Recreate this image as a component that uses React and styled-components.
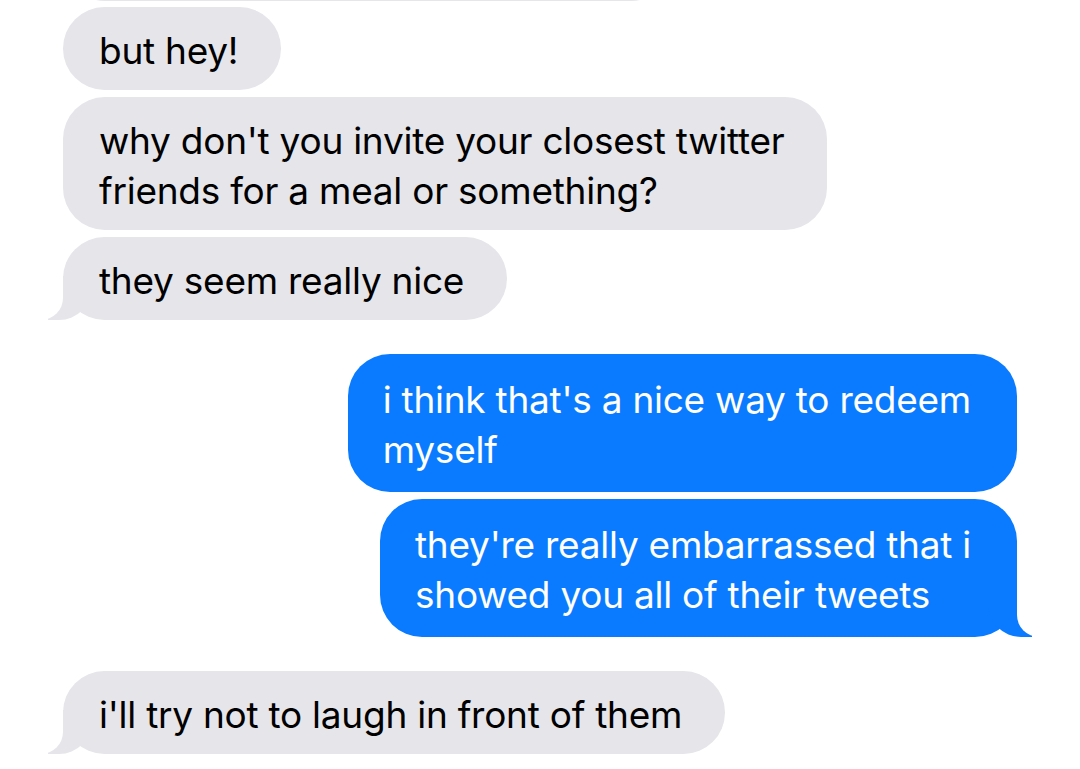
import styled, { createGlobalStyle } from 'styled-components'

/*---> Data <---*/
const groups = [
  {
    from: 'them',
    messages: ['but hey!', "why don't you invite your closest twitter\nfriends for a meal or something?", 'they seem really nice'],
  },
  {
    from: 'me',
    messages: ["i think that's a nice way to redeem\nmyself", "they're really embarrassed that i\nshowed you all of their tweets"],
  },
  {
    from: 'them',
    messages: ["i'll try not to laugh in front of them"],
  },
]

/*---> Component <---*/
function App() {
  return (
    <>
      <GlobalStyle />
      <Thread>
        <Group $me={false}>
          <Clipped aria-hidden="true" />
        </Group>
        {groups.map((group, i) => (
          <Group key={i} $me={group.from === 'me'} $spaced={i > 0}>
            {group.messages.map((text, j) => (
              <Bubble key={j} $me={group.from === 'me'} $tail={j === group.messages.length - 1}>
                {text}
              </Bubble>
            ))}
          </Group>
        ))}
      </Thread>
    </>
  )
}

/*---> Styles <---*/
const GlobalStyle = createGlobalStyle`
  body {
    margin: 0;
    background: #ffffff;
    font-family: Inter, Roboto, "Liberation Sans", sans-serif;
    overflow: hidden;
  }
`

const Thread = styled.div`
  width: 1080px;
  height: 769px;
  display: flex;
  flex-direction: column;
  padding: 0 63px;
  box-sizing: border-box;
  overflow: hidden;
`

const Group = styled.div`
  display: flex;
  flex-direction: column;
  align-items: ${(p) => (p.$me ? 'flex-end' : 'flex-start')};
  gap: 7px;
  margin-top: ${(p) => (p.$spaced ? '34px' : '6px')};

  &:first-child {
    margin-top: 0;
  }
`

const Clipped = styled.div`
  width: 610px;
  height: 84px;
  margin-top: -83px;
  border-radius: 42px;
  background: #e5e5ea;
`

const Bubble = styled.div`
  position: relative;
  box-sizing: border-box;
  padding: ${(p) => (p.$me ? '21px 46px 17px 35px' : '19px 43px 14px 36px')};
  border-radius: 42px;
  background: ${(p) => (p.$me ? '#0a7bff' : '#e5e5ea')};
  color: ${(p) => (p.$me ? '#ffffff' : '#000000')};
  font-size: 37px;
  line-height: 50px;
  letter-spacing: -0.25px;
  white-space: pre-line;

  ${(p) =>
    p.$tail &&
    `
    &::before {
      content: '';
      position: absolute;
      bottom: 0;
      ${p.$me ? 'right' : 'left'}: -15px;
      width: 44px;
      height: 44px;
      background: ${p.$me ? '#0a7bff' : '#e5e5ea'};
      border-bottom-${p.$me ? 'left' : 'right'}-radius: 33px;
    }

    &::after {
      content: '';
      position: absolute;
      bottom: 0;
      ${p.$me ? 'right' : 'left'}: -57px;
      width: 57px;
      height: 44px;
      background: #ffffff;
      border-bottom-${p.$me ? 'left' : 'right'}-radius: 22px;
    }
  `}
`

export default App
